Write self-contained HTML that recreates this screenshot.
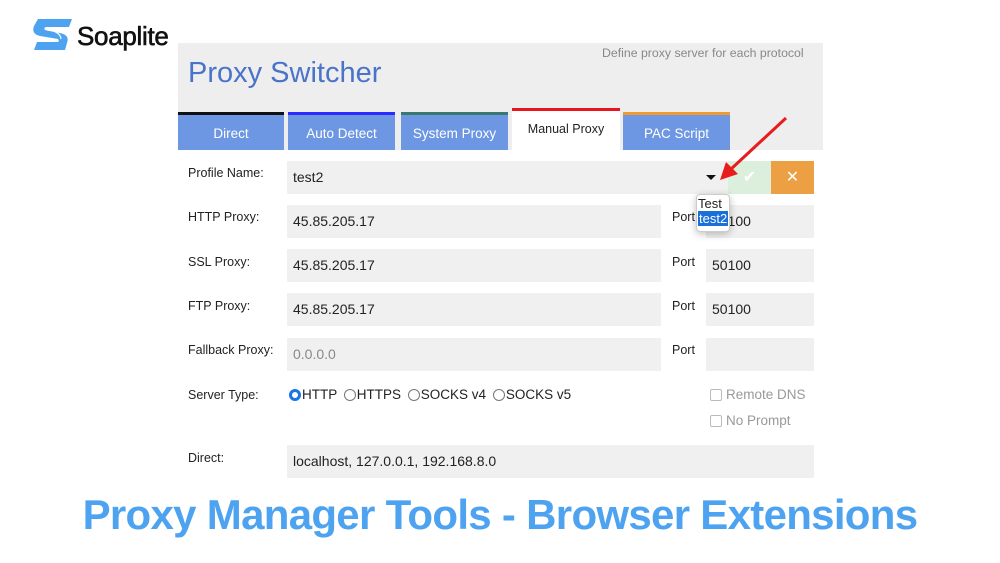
<!DOCTYPE html>
<html><head><meta charset="utf-8"><style>
*{margin:0;padding:0;box-sizing:border-box}
body{width:1000px;height:563px;background:#fff;position:relative;overflow:hidden;font-family:"Liberation Sans",Arial,sans-serif;color:#222}
.a{position:absolute}
.hdr{left:178px;top:43px;width:645px;height:107px;background:#eeeeee}
.tab{top:112px;height:38px;background:#6d97e2;color:#fff;font-size:13.5px;text-align:center;line-height:38px;border-top:3px solid #000}
.lbl{font-size:12.5px;color:#222}
.in{background:#f0f0f0;font-size:14px;line-height:33px;padding-left:6px;height:33px}
.port{font-size:12.5px}
.rad{display:inline-block;width:12px;height:12px;border:1px solid #777;border-radius:50%;vertical-align:-2px;margin-right:1px;margin-left:3px}
.cb{display:inline-block;width:12px;height:12px;border:1px solid #bbb;border-radius:2px;vertical-align:-2px;margin-right:4px}
</style></head><body>
<svg class="a" style="left:30px;top:17px" width="44" height="36" viewBox="0 0 44 36">
<path d="M8 2 H42 L39 10 H17 Q13 10 15 13 L30 16 Q40 18 37 26 L35 33 H4 L7 25 H27 Q30 25 28 22 L10 19 Q1 17 4 9 Z" fill="#4ea3f0"/>
<path d="M17 13 Q30 14 31 22" stroke="#fff" stroke-width="1.2" fill="none"/>
</svg>
<div class="a" style="left:77px;top:21px;font-size:26px;color:#111;-webkit-text-stroke:0.6px #111;letter-spacing:-0.3px">Soaplite</div>
<div class="a hdr"></div>
<div class="a" style="left:602px;top:46px;font-size:12.3px;color:#888">Define proxy server for each protocol</div>
<div class="a" style="left:188px;top:57px;font-size:29px;color:#4a74c9">Proxy Switcher</div>
<div class="a tab" style="left:178px;width:106px;border-top-color:#111">Direct</div>
<div class="a tab" style="left:288px;width:107px;border-top-color:#2b2bff">Auto Detect</div>
<div class="a tab" style="left:401px;width:107px;border-top-color:#3a7a6e">System Proxy</div>
<div class="a tab" style="left:512px;top:108px;height:42px;width:108px;background:#fff;color:#222;border-top-color:#e8141e;line-height:36px;font-size:12.5px">Manual Proxy</div>
<div class="a tab" style="left:623px;width:107px;border-top-color:#f19a2e">PAC Script</div>

<div class="a lbl" style="left:188px;top:166px">Profile Name:</div>
<div class="a in" style="left:287px;top:161px;width:441px">test2</div>
<div class="a" style="left:706px;top:175px;width:0;height:0;border-left:5px solid transparent;border-right:5px solid transparent;border-top:5px solid #111"></div>
<div class="a" style="left:728px;top:161px;width:43px;height:33px;background:#dcefdc;color:#fff;text-align:center;line-height:33px;font-size:16px">✔</div>
<div class="a" style="left:771px;top:161px;width:43px;height:33px;background:#eda043;color:#fff;text-align:center;line-height:33px;font-size:16px">✕</div>

<div class="a lbl" style="left:188px;top:210px">HTTP Proxy:</div>
<div class="a in" style="left:287px;top:205px;width:374px">45.85.205.17</div>
<div class="a port" style="left:672px;top:210px">Port</div>
<div class="a in" style="left:706px;top:205px;width:108px">50100</div>

<div class="a lbl" style="left:188px;top:255px">SSL Proxy:</div>
<div class="a in" style="left:287px;top:249px;width:374px">45.85.205.17</div>
<div class="a port" style="left:672px;top:255px">Port</div>
<div class="a in" style="left:706px;top:249px;width:108px">50100</div>

<div class="a lbl" style="left:188px;top:299px">FTP Proxy:</div>
<div class="a in" style="left:287px;top:293px;width:374px">45.85.205.17</div>
<div class="a port" style="left:672px;top:299px">Port</div>
<div class="a in" style="left:706px;top:293px;width:108px">50100</div>

<div class="a lbl" style="left:188px;top:343px">Fallback Proxy:</div>
<div class="a in" style="left:287px;top:338px;width:374px;color:#888">0.0.0.0</div>
<div class="a port" style="left:672px;top:343px">Port</div>
<div class="a in" style="left:706px;top:338px;width:108px"></div>

<div class="a lbl" style="left:188px;top:388px">Server Type:</div>
<div class="a" style="left:286px;top:387px;font-size:13.5px"><span class="rad" style="border:3.5px solid #1a73e8"></span>HTTP <span class="rad"></span>HTTPS <span class="rad"></span>SOCKS v4 <span class="rad"></span>SOCKS v5</div>
<div class="a" style="left:710px;top:387px;font-size:13.5px;color:#999"><span class="cb"></span>Remote DNS</div>
<div class="a" style="left:710px;top:413px;font-size:13.5px;color:#999"><span class="cb"></span>No Prompt</div>

<div class="a lbl" style="left:188px;top:451px">Direct:</div>
<div class="a in" style="left:287px;top:445px;width:527px">localhost, 127.0.0.1, 192.168.8.0</div>

<div class="a" style="left:696px;top:194px;width:34px;height:38px;background:#fff;border:1px solid #ccc;border-radius:4px;box-shadow:0 2px 8px rgba(0,0,0,.25);font-size:13px;padding-top:1px">
<div style="padding-left:1px">Test</div><div style="background:#1a6fd8;color:#fff;padding-left:1px;margin:0 1px">test2</div></div>

<svg class="a" style="left:700px;top:110px" width="100" height="80"><line x1="86" y1="8" x2="30" y2="60" stroke="#e81c1c" stroke-width="3"/><polygon points="20,70 26,52 38,64" fill="#e81c1c"/></svg>

<div class="a" style="left:0;width:1000px;top:491px;text-align:center;font-size:42px;font-weight:bold;color:#4ea3f0;letter-spacing:-0.7px;white-space:nowrap">Proxy Manager Tools - Browser Extensions</div>
</body></html>
